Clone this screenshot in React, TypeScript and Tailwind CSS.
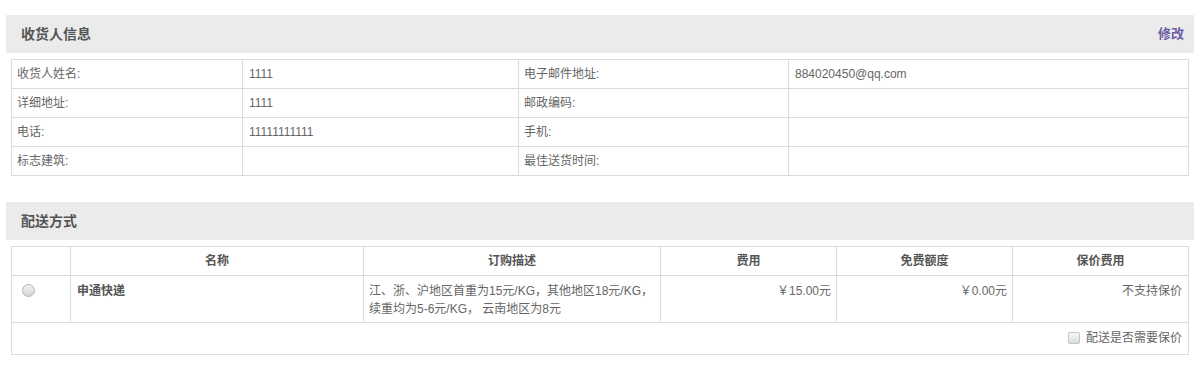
const font = { fontFamily: '"Liberation Sans", "Noto Sans CJK SC", sans-serif' };

const consignee = [
  ["收货人姓名:", "1111", "电子邮件地址:", "884020450@qq.com"],
  ["详细地址:", "1111", "邮政编码:", ""],
  ["电话:", "11111111111", "手机:", ""],
  ["标志建筑:", "", "最佳送货时间:", ""],
];

function SectionTitle({ title, action }: { title: string; action?: string }) {
  return (
    <div className="flex h-[38px] items-center justify-between bg-[#ebebeb] pl-[15px] pr-[10px]">
      <h3 className="text-[14px] font-bold text-[#555]">{title}</h3>
      {action && <a className="cursor-pointer text-[13px] font-bold text-[#6b5ba6]">{action}</a>}
    </div>
  );
}

export default function App() {
  return (
    <div className="min-h-screen bg-white px-[6px] pt-[15px] text-[12px] text-[#666]" style={font}>
      <SectionTitle title="收货人信息" action="修改" />
      <table className="mx-[5px] mt-[6px] w-[1178px] table-fixed border-collapse border border-[#dcdcdc]">
        <colgroup>
          <col className="w-[231px]" />
          <col className="w-[276px]" />
          <col className="w-[270px]" />
          <col />
        </colgroup>
        <tbody>
          {consignee.map((row, i) => (
            <tr key={i} className="h-[29px]">
              {row.map((cell, j) => (
                <td key={j} className={`border border-[#dcdcdc] align-middle ${j % 2 === 0 ? "pl-[5px]" : "pl-[6px]"}`}>
                  {cell}
                </td>
              ))}
            </tr>
          ))}
        </tbody>
      </table>

      <div className="mt-[26px]">
        <SectionTitle title="配送方式" />
      </div>
      <table className="mx-[5px] mt-[6px] w-[1178px] table-fixed border-collapse border border-[#dcdcdc]">
        <colgroup>
          <col className="w-[59px]" />
          <col className="w-[293px]" />
          <col className="w-[297px]" />
          <col className="w-[176px]" />
          <col className="w-[176px]" />
          <col />
        </colgroup>
        <thead>
          <tr className="h-[29px] font-bold text-[#555]">
            <th className="border border-[#dcdcdc]"></th>
            <th className="border border-[#dcdcdc]">名称</th>
            <th className="border border-[#dcdcdc]">订购描述</th>
            <th className="border border-[#dcdcdc]">费用</th>
            <th className="border border-[#dcdcdc]">免费额度</th>
            <th className="border border-[#dcdcdc]">保价费用</th>
          </tr>
        </thead>
        <tbody>
          <tr className="h-[47px] align-top">
            <td className="border border-[#dcdcdc] pl-[10px] pt-[8px]">
              <input
                type="radio"
                name="shipping"
                className="m-0 block h-[13px] w-[13px] appearance-none rounded-full border border-[#b5b5b5] bg-gradient-to-b from-[#f2f2f2] to-[#d4d4d4]"
              />
            </td>
            <td className="border border-[#dcdcdc] pl-[6px] pt-[6px] font-bold text-[#555]">申通快递</td>
            <td className="border border-[#dcdcdc] px-[5px] pt-[6px] leading-[18px]">
              江、浙、沪地区首重为15元/KG，其他地区18元/KG，续重均为5-6元/KG， 云南地区为8元
            </td>
            <td className="border border-[#dcdcdc] pr-[5px] pt-[6px] text-right">￥15.00元</td>
            <td className="border border-[#dcdcdc] pr-[5px] pt-[6px] text-right">￥0.00元</td>
            <td className="border border-[#dcdcdc] pr-[6px] pt-[6px] text-right">不支持保价</td>
          </tr>
          <tr className="h-[32px]">
            <td colSpan={6} className="border border-[#dcdcdc] pr-[6px] text-right">
              <label className="inline-flex items-center gap-[6px]">
                <input
                  type="checkbox"
                  className="m-0 h-[12px] w-[12px] appearance-none rounded-[2px] border border-[#c4c4c4] bg-gradient-to-b from-[#f7f7f7] to-[#dcdcdc]"
                />
                配送是否需要保价
              </label>
            </td>
          </tr>
        </tbody>
      </table>
    </div>
  );
}
